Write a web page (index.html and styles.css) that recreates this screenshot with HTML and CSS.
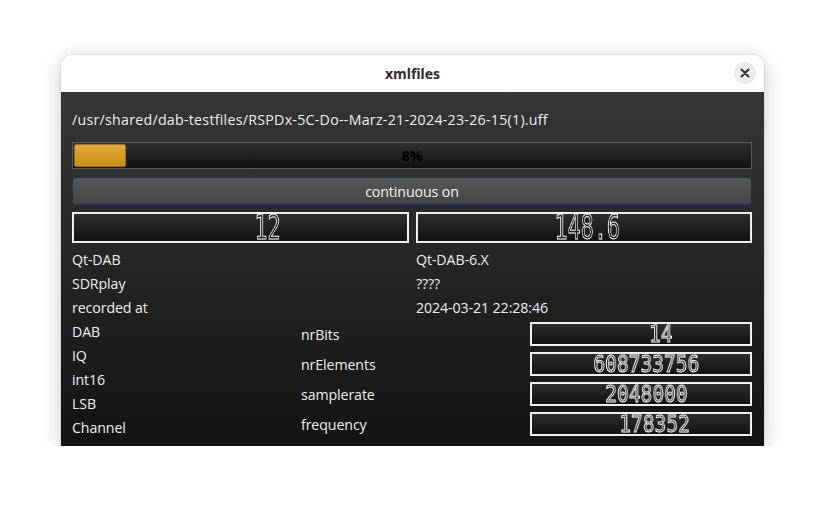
FILE: index.html
```html
<!DOCTYPE html>
<html>
<head>
<meta charset="utf-8">
<link rel="stylesheet" href="styles.css">
</head>
<body>
<div class="window">
  <div class="titlebar">
    <span class="title">xmlfiles</span>
    <span class="close">
      <svg width="10" height="10" viewBox="0 0 10 10"><path d="M1.5 1.5 L8.5 8.5 M8.5 1.5 L1.5 8.5" stroke="#2e2e2e" stroke-width="2" stroke-linecap="round"/></svg>
    </span>
  </div>
  <div class="content">
    <div class="path">/usr/shared/dab-testfiles/RSPDx-5C-Do--Marz-21-2024-23-26-15(1).uff</div>
    <div class="progress">
      <div class="chunk" style="width:52px"></div>
      <span class="pct">8%</span>
    </div>
    <div class="btn">continuous on</div>
    <div class="pair">
      <div class="lcd big"><span class="digits shift-12">12</span></div>
      <div class="lcd big"><span class="digits shift-148">148.6</span></div>
    </div>
    <div class="pair rows">
      <div class="label">Qt-DAB</div><div class="label">Qt-DAB-6.X</div>
      <div class="label">SDRplay</div><div class="label">????</div>
      <div class="label">recorded at</div><div class="label">2024-03-21 22:28:46</div>
    </div>
    <div class="bottom">
      <div class="list">
        <div class="label">DAB</div>
        <div class="label">IQ</div>
        <div class="label">int16</div>
        <div class="label">LSB</div>
        <div class="label">Channel</div>
      </div>
      <div class="params">
        <div class="label">nrBits</div>
        <div class="lcd small"><span class="digits shift-bits">14</span></div>
        <div class="label">nrElements</div>
        <div class="lcd small"><span class="digits shift-elem">608733756</span></div>
        <div class="label">samplerate</div>
        <div class="lcd small"><span class="digits shift-rate">2048000</span></div>
        <div class="label">frequency</div>
        <div class="lcd small"><span class="digits shift-freq">178352</span></div>
      </div>
    </div>
  </div>
</div>
</body>
</html>
```
FILE: styles.css
```css
html, body {
  margin: 0;
  padding: 0;
  background: #ffffff;
}
body {
  font-family: "Open Sans", "Noto Sans", sans-serif;
}
.window {
  margin: 55px 0 0 61px;
  width: 703px;
  border-radius: 11px 11px 0 0;
  box-shadow: 0 4px 20px rgba(0,0,0,0.22), 0 0 0 1px rgba(0,0,0,0.06);
  overflow: hidden;
}
.titlebar {
  height: 37px;
  background: #ffffff;
  display: flex;
  align-items: center;
  justify-content: center;
  position: relative;
}
.title {
  font-family: "Noto Sans", sans-serif;
  font-weight: 700;
  font-size: 14px;
  color: #2e2e2e;
}
.close {
  position: absolute;
  right: 8px;
  top: 7px;
  width: 22px;
  height: 22px;
  border-radius: 50%;
  background: #ebebeb;
  display: flex;
  align-items: center;
  justify-content: center;
}
.content {
  background: linear-gradient(#363636, #131313);
  padding: 18px 12px 7px 11px;
  color: #eeeeee;
  font-size: 14.2px;
  letter-spacing: -0.1px;
}
.path {
  line-height: 20px;
  height: 20px;
  white-space: nowrap;
  letter-spacing: 0.27px;
}
.progress {
  margin-top: 12px;
  height: 27px;
  box-sizing: border-box;
  border: 1px solid #5a5a5a;
  background: linear-gradient(#303030, #111111);
  position: relative;
  display: flex;
  align-items: center;
  justify-content: center;
  padding: 1px;
}
.chunk {
  position: absolute;
  left: 1px;
  top: 1px;
  bottom: 1px;
  box-sizing: border-box;
  border: 1px solid #9a6c14;
  border-radius: 2px;
  background: linear-gradient(#e2a830, #c98f1d);
}
.pct {
  position: relative;
  color: #000000;
  font-weight: 700;
  font-size: 14px;
  letter-spacing: 0;
}
.btn {
  margin-top: 8px;
  height: 28px;
  box-sizing: border-box;
  border: 1px solid #1b3556;
  border-radius: 3px;
  background: linear-gradient(#585858, #454545);
  display: flex;
  align-items: center;
  justify-content: center;
  color: #f2f2f2;
}
.pair {
  display: grid;
  grid-template-columns: 337px 336px;
  column-gap: 7px;
}
.lcd {
  box-sizing: border-box;
  border: 2px solid #f0f0f0;
  background: linear-gradient(#2e2e2e, #121212);
  display: flex;
  align-items: center;
  justify-content: center;
}
.lcd.big {
  height: 31px;
  margin-top: 7px;
}
.lcd.small {
  height: 24px;
}
.digits {
  display: inline-block;
  font-family: "DejaVu Sans Mono", monospace;
  color: transparent;
  -webkit-text-stroke: 1px #ffffff;
  white-space: pre;
  letter-spacing: 0;
  will-change: transform;
}
.big .digits {
  font-size: 34px;
  line-height: 27px;
  transform: scaleX(0.64);
}
.small .digits {
  font-size: 23px;
  line-height: 20px;
  transform: scaleX(0.85);
}
.shift-12 { margin-left: 54px; }
.shift-148 { margin-left: 6px; }
.shift-bits { margin-left: 40px; }
.shift-elem { margin-left: 10px; }
.shift-rate { margin-left: 10px; }
.shift-freq { margin-left: 28px; }
.rows {
  margin-top: 4px;
}
.label {
  line-height: 26px;
  height: 24px;
  white-space: nowrap;
}
.params .label {
  line-height: 24px;
  padding-top: 1px;
  height: 24px;
  box-sizing: border-box;
}
.bottom {
  display: flex;
}
.list {
  width: 229px;
}
.params {
  margin-top: 3px;
  display: grid;
  grid-template-columns: 229px 222px;
  grid-auto-rows: 24px;
  row-gap: 6px;
  align-items: center;
}
```
